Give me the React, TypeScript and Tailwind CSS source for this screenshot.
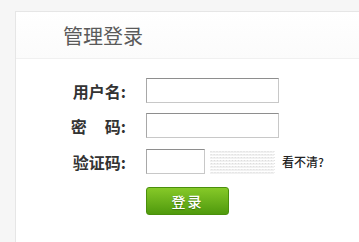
import React from 'react';

const font = { fontFamily: '"Noto Sans CJK SC", "Liberation Sans", sans-serif' };

function Captcha() {
  const rows = [0, 1, 2, 3, 4, 5, 6, 7];
  const cols = Array.from({ length: 22 }, (_, i) => i);
  return (
    <svg width="66" height="25" viewBox="0 0 66 25" className="shrink-0">
      {rows.map((r) => (
        <line key={`r${r}`} x1="1" x2="65" y1={3 + r * 3} y2={3 + r * 3} stroke="#e3e3e3" strokeWidth="1" />
      ))}
      {cols.map((c) => (
        <line key={`c${c}`} x1={2 + c * 3} x2={3 + c * 3} y1="2" y2="24" stroke="#d6d6d6" strokeWidth="0.8" strokeDasharray="1 2" />
      ))}
    </svg>
  );
}

function Field({ label, children }: { label: React.ReactNode; children: React.ReactNode }) {
  return (
    <div className="flex items-center h-[25px]">
      <div className="w-[59px] text-right text-[16px] font-bold text-[#333] leading-none whitespace-nowrap">{label}</div>
      <div className="ml-[20px] flex items-center">{children}</div>
    </div>
  );
}

export default function App() {
  const inputCls =
    'h-[25px] bg-white border border-[#c8c8c8] border-t-[#8e8e8e] border-l-[#a8a8a8] outline-none';
  return (
    <div className="w-[359px] h-[242px] bg-[#f6f6f6] pl-[15px] pt-[11px] overflow-hidden" style={font}>
      <div className="h-full bg-white border-l border-t border-[#e6e6e6]">
        <div className="h-[47px] border-b border-[#f0f0f0] bg-gradient-to-b from-white to-[#fbfbfb] pl-[47px] pt-[12px]">
          <h1 className="text-[20px] leading-[24px] text-[#5a5a5a] font-normal">管理登录</h1>
        </div>
        <div className="pt-[19px] pl-[51px] flex flex-col gap-[10px]">
          <Field label="用户名:">
            <input className={`${inputCls} w-[133px]`} />
          </Field>
          <Field label={<span>密&nbsp;&nbsp;&nbsp;&nbsp;&nbsp;码:</span>}>
            <input type="password" className={`${inputCls} w-[133px]`} />
          </Field>
          <div className="mt-[1px]">
            <Field label="验证码:">
              <input className={`${inputCls} w-[59px]`} />
              <div className="ml-[4px]">
                <Captcha />
              </div>
              <span className="ml-[7px] text-[12px] font-medium text-[#222]">看不清?</span>
            </Field>
          </div>
          <div className="pl-[79px] mt-[3px]">
            <button className="w-[83px] h-[28px] rounded-[3px] border border-[#4a8f0c] bg-gradient-to-b from-[#86c928] to-[#4f9a0c] text-white text-[14px] font-medium tracking-[2px] leading-none [text-shadow:0_1px_1px_rgba(0,0,0,0.3)]">
              登录
            </button>
          </div>
        </div>
      </div>
    </div>
  );
}
